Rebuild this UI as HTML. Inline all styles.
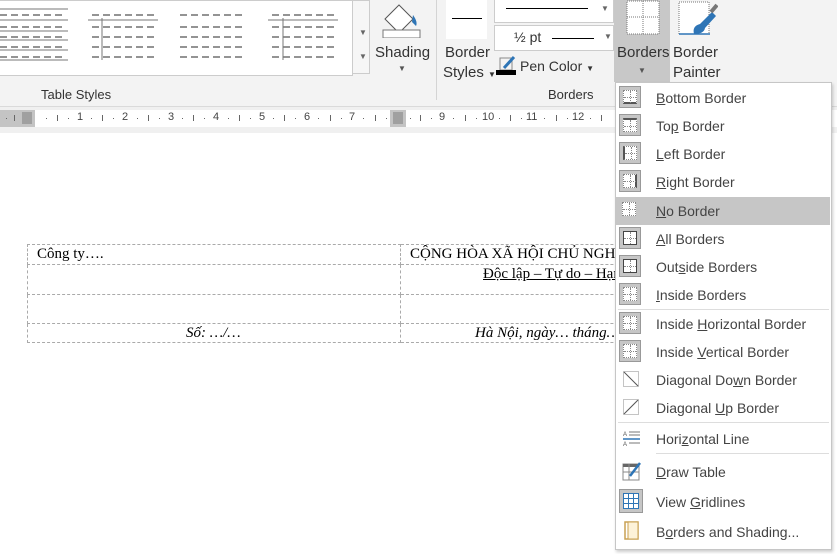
<!DOCTYPE html><html><head><style>
body{margin:0;width:837px;height:554px;overflow:hidden;position:relative;background:#fff;font-family:"Liberation Sans",sans-serif;}
.a{position:absolute}
.rib{left:0;top:0;width:837px;height:106px;background:#f3f3f3;border-bottom:1px solid #dadada}
.t{font-size:14px;color:#333;white-space:nowrap}
.menu{left:615px;top:82px;width:215px;height:466px;background:#fff;border:1px solid #c6c6c6;box-shadow:1px 2px 3px rgba(0,0,0,.2)}
.it{position:absolute;left:0;width:215px;height:28px;font-size:14px;color:#444}
.it span{position:absolute;left:40px;top:6px;white-space:nowrap}
.ic{position:absolute;left:3px;top:2px;width:22px;height:22px;background:#c6c6c6;border:1px solid #999;box-sizing:border-box}
.ic i{position:absolute;left:3px;top:3px;width:14px;height:14px;background:#fff;border:1px dotted #888;box-sizing:border-box}
.ic i:before{content:"";position:absolute;left:6px;top:0;height:12px;border-left:1px dotted #888}
.ic i:after{content:"";position:absolute;top:6px;left:0;width:12px;border-top:1px dotted #888}
.sep{position:absolute;height:1px;background:#ddd}
u{text-decoration:underline}
.rn{position:absolute;top:111px;font-size:11px;color:#444}
.rd{position:absolute;top:118px;width:1px;height:1px;background:#666}
.rt{position:absolute;top:115px;width:1px;height:6px;background:#666}
table{table-layout:fixed}
td{border:1px dashed #aaa;font-family:"Liberation Serif",serif;font-size:15px;padding:0 9px;vertical-align:top;white-space:nowrap;overflow:hidden;line-height:18px}
</style></head><body>
<div class="a rib"></div>
<div class="a" style="left:0;top:0;width:352px;height:74px;background:#fff;border:1px solid #ccc;border-left:none"></div>
<svg class="a" style="left:0;top:0" width="352" height="70">
<g stroke="#555" stroke-width="1.3" stroke-dasharray="7,4">
<line x1="0" y1="15" x2="64" y2="15"/><line x1="0" y1="27" x2="64" y2="27"/><line x1="0" y1="37" x2="64" y2="37"/><line x1="0" y1="47" x2="64" y2="47"/><line x1="0" y1="57" x2="64" y2="57"/>
<line x1="92" y1="15" x2="156" y2="15"/><line x1="92" y1="27" x2="156" y2="27"/><line x1="92" y1="37" x2="156" y2="37"/><line x1="92" y1="47" x2="156" y2="47"/><line x1="92" y1="57" x2="156" y2="57"/>
<line x1="180" y1="15" x2="244" y2="15"/><line x1="180" y1="27" x2="244" y2="27"/><line x1="180" y1="37" x2="244" y2="37"/><line x1="180" y1="47" x2="244" y2="47"/><line x1="180" y1="57" x2="244" y2="57"/>
<line x1="272" y1="15" x2="336" y2="15"/><line x1="272" y1="27" x2="336" y2="27"/><line x1="272" y1="37" x2="336" y2="37"/><line x1="272" y1="47" x2="336" y2="47"/><line x1="272" y1="57" x2="336" y2="57"/>
</g>
<g stroke="#777" stroke-width="1"><line x1="0" y1="9" x2="68" y2="9"/><line x1="0" y1="20" x2="68" y2="20"/><line x1="0" y1="31" x2="68" y2="31"/><line x1="0" y1="40" x2="68" y2="40"/><line x1="0" y1="50" x2="68" y2="50"/><line x1="0" y1="60" x2="68" y2="60"/>
<line x1="88" y1="20" x2="158" y2="20"/><line x1="102" y1="18" x2="102" y2="60"/><line x1="268" y1="20" x2="338" y2="20"/><line x1="283" y1="18" x2="283" y2="60"/></g>
</svg>
<div class="a" style="left:352px;top:0;width:18px;height:74px;background:#f6f6f6;border:1px solid #ccc;box-sizing:border-box"></div>
<div class="a t" style="left:359px;top:28px;font-size:8px;color:#666">▼</div>
<div class="a t" style="left:359px;top:52px;font-size:8px;color:#666">▼</div>
<svg class="a" style="left:382px;top:0" width="40" height="38"><path d="M3 19 L17 5 L31 19 L17 33Z" fill="#fff" stroke="#555"/><path d="M31 15 Q36 22 34 26 L30 22Z" fill="#2e75b6"/><rect x="1" y="30" width="37" height="8" fill="#fff" stroke="#777"/></svg>
<div class="a t" style="left:375px;top:44px;font-size:15px">Shading</div>
<div class="a t" style="left:398px;top:64px;font-size:8px;color:#555">▼</div>
<div class="a t" style="left:41px;top:87px;font-size:13px">Table Styles</div>
<div class="a" style="left:436px;top:0;width:1px;height:100px;background:#d4d4d4"></div>
<div class="a" style="left:446px;top:0;width:41px;height:39px;background:#fff"></div>
<div class="a" style="left:452px;top:18px;width:30px;height:1px;background:#000"></div>
<div class="a t" style="left:445px;top:44px;font-size:15px">Border</div>
<div class="a t" style="left:443px;top:64px;font-size:15px">Styles <span style="font-size:8px">▼</span></div>
<div class="a" style="left:494px;top:0;width:120px;height:23px;background:#fff;border:1px solid #ccc;border-top:none;box-sizing:border-box"></div>
<div class="a" style="left:506px;top:8px;width:82px;height:1px;background:#000"></div>
<div class="a t" style="left:601px;top:4px;font-size:8px;color:#666">▼</div>
<div class="a" style="left:494px;top:25px;width:120px;height:26px;background:#fff;border:1px solid #ccc;box-sizing:border-box"></div>
<div class="a t" style="left:514px;top:29px;font-size:14px">½ pt</div>
<div class="a" style="left:552px;top:38px;width:42px;height:1px;background:#000"></div>
<div class="a t" style="left:604px;top:32px;font-size:8px;color:#666">▼</div>
<svg class="a" style="left:496px;top:55px" width="22" height="20"><path d="M4 3h12v12H4z" fill="none" stroke="#888"/><path d="M8 13 L18 2" stroke="#2e75b6" stroke-width="3"/><rect x="0" y="15" width="20" height="5" fill="#000"/></svg>
<div class="a t" style="left:520px;top:58px;font-size:14px">Pen Color <span style="font-size:8px">▼</span></div>
<div class="a t" style="left:548px;top:87px;font-size:13px">Borders</div>
<div class="a" style="left:614px;top:0;width:56px;height:82px;background:#c8c8c8"></div>
<svg class="a" style="left:626px;top:0" width="34" height="36"><rect x="1" y="1" width="32" height="33" fill="#fff" stroke="#777" stroke-dasharray="1,1"/><line x1="17" y1="1" x2="17" y2="34" stroke="#777" stroke-dasharray="1,1"/><line x1="1" y1="17" x2="33" y2="17" stroke="#777" stroke-dasharray="1,1"/></svg>
<div class="a t" style="left:617px;top:44px;font-size:15px">Borders</div>
<div class="a t" style="left:638px;top:66px;font-size:8px;color:#555">▼</div>
<svg class="a" style="left:678px;top:0" width="40" height="40"><rect x="1" y="2" width="30" height="32" fill="#fff" stroke="#777" stroke-dasharray="1,1"/><line x1="1" y1="34" x2="32" y2="34" stroke="#2e75b6" stroke-width="1.5"/><path d="M16 34 Q14 26 22 24 L34 12 L38 16 L27 28 Q26 34 16 34Z" fill="#2e75b6"/><path d="M33 12 L39 5" stroke="#777" stroke-width="4"/></svg>
<div class="a t" style="left:673px;top:44px;font-size:15px">Border</div>
<div class="a t" style="left:673px;top:64px;font-size:15px">Painter</div>
<!-- ruler -->
<div class="a" style="left:0;top:107px;width:837px;height:26px;background:#f0f0f0"></div>
<div class="a" style="left:0;top:110px;width:35px;height:17px;background:#c4c4c4"></div>
<div class="a" style="left:35px;top:110px;width:802px;height:17px;background:#fff"></div>
<div class="a" style="left:390px;top:110px;width:16px;height:17px;background:#c4c4c4"></div>
<div class="a" style="left:22px;top:112px;width:10px;height:12px;background:#888;opacity:.6"></div>
<div class="a" style="left:393px;top:112px;width:10px;height:12px;background:#888;opacity:.6"></div>
<div class="rt" style="left:14px"></div><div class="rd" style="left:6px"></div>
<span class="rn" style="left:77px">1</span><span class="rn" style="left:122px">2</span><span class="rn" style="left:168px">3</span><span class="rn" style="left:213px">4</span><span class="rn" style="left:259px">5</span><span class="rn" style="left:304px">6</span><span class="rn" style="left:349px">7</span><span class="rn" style="left:439px">9</span><span class="rn" style="left:482px">10</span><span class="rn" style="left:526px">11</span><span class="rn" style="left:572px">12</span>
<div class="rt" style="left:57px"></div><div class="rt" style="left:102px"></div><div class="rt" style="left:148px"></div><div class="rt" style="left:193px"></div><div class="rt" style="left:239px"></div><div class="rt" style="left:284px"></div><div class="rt" style="left:330px"></div><div class="rt" style="left:375px"></div><div class="rt" style="left:420px"></div><div class="rt" style="left:465px"></div><div class="rt" style="left:510px"></div><div class="rt" style="left:556px"></div><div class="rt" style="left:601px"></div>
<div class="rd" style="left:46px"></div><div class="rd" style="left:68px"></div><div class="rd" style="left:91px"></div><div class="rd" style="left:113px"></div><div class="rd" style="left:137px"></div><div class="rd" style="left:159px"></div><div class="rd" style="left:182px"></div><div class="rd" style="left:204px"></div><div class="rd" style="left:228px"></div><div class="rd" style="left:250px"></div><div class="rd" style="left:273px"></div><div class="rd" style="left:295px"></div><div class="rd" style="left:318px"></div><div class="rd" style="left:341px"></div><div class="rd" style="left:363px"></div><div class="rd" style="left:386px"></div><div class="rd" style="left:410px"></div><div class="rd" style="left:431px"></div><div class="rd" style="left:453px"></div><div class="rd" style="left:476px"></div><div class="rd" style="left:499px"></div><div class="rd" style="left:521px"></div><div class="rd" style="left:544px"></div><div class="rd" style="left:567px"></div><div class="rd" style="left:590px"></div>
<!-- table -->
<table class="a" style="left:27px;top:244px;border-collapse:collapse;width:720px">
<col style="width:373px"><col style="width:347px">
<tr style="height:20px"><td>Công ty….</td><td>CỘNG HÒA XÃ HỘI CHỦ NGHĨA VIỆT NAM</td></tr>
<tr style="height:30px"><td></td><td style="padding-left:82px"><u>Độc lập – Tự do – Hạnh phúc</u></td></tr>
<tr style="height:29px"><td></td><td></td></tr>
<tr style="height:19px"><td style="font-style:italic;padding-left:158px">Số: …/…</td><td style="font-style:italic;padding-left:74px">Hà Nội, ngày… tháng… năm</td></tr>
</table>
<div class="a menu">
<div class="a" style="left:0;top:114px;width:214px;height:28px;background:#c6c6c6"></div>
<div class="it" style="top:1px"><div class="ic"><i style="border-bottom:2px solid #555"></i></div><span><u>B</u>ottom Border</span></div>
<div class="it" style="top:29px"><div class="ic"><i style="border-top:2px solid #555"></i></div><span>To<u>p</u> Border</span></div>
<div class="it" style="top:57px"><div class="ic"><i style="border-left:2px solid #555"></i></div><span><u>L</u>eft Border</span></div>
<div class="it" style="top:85px"><div class="ic"><i style="border-right:2px solid #555"></i></div><span><u>R</u>ight Border</span></div>
<div class="it" style="top:114px"><div class="ic" style="background:none;border:none"><i></i></div><span><u>N</u>o Border</span></div>
<div class="it" style="top:142px"><div class="ic"><i style="border:1px solid #444"></i></div><span><u>A</u>ll Borders</span></div>
<div class="it" style="top:170px"><div class="ic"><i style="border:1px solid #444"></i></div><span>Out<u>s</u>ide Borders</span></div>
<div class="it" style="top:198px"><div class="ic"><i></i></div><span><u>I</u>nside Borders</span></div>
<div class="sep" style="left:2px;top:226px;width:211px"></div>
<div class="it" style="top:227px"><div class="ic"><i></i></div><span>Inside <u>H</u>orizontal Border</span></div>
<div class="it" style="top:255px"><div class="ic"><i></i></div><span>Inside <u>V</u>ertical Border</span></div>
<div class="it" style="top:283px"><svg class="a" style="left:7px;top:5px" width="16" height="16"><rect x=".5" y=".5" width="15" height="15" fill="none" stroke="#888" stroke-dasharray="1,1"/><line x1="1" y1="1" x2="15" y2="15" stroke="#555"/></svg><span>Diagonal Do<u>w</u>n Border</span></div>
<div class="it" style="top:311px"><svg class="a" style="left:7px;top:5px" width="16" height="16"><rect x=".5" y=".5" width="15" height="15" fill="none" stroke="#888" stroke-dasharray="1,1"/><line x1="1" y1="15" x2="15" y2="1" stroke="#555"/></svg><span>Diagonal <u>U</u>p Border</span></div>
<div class="sep" style="left:2px;top:339px;width:211px"></div>
<div class="it" style="top:342px"><svg class="a" style="left:7px;top:4px" width="18" height="18"><text x="0" y="7" font-size="6" fill="#555" font-family="Liberation Sans">A</text><text x="0" y="17" font-size="6" fill="#555" font-family="Liberation Sans">A</text><line x1="6" y1="3" x2="17" y2="3" stroke="#777"/><line x1="6" y1="6" x2="17" y2="6" stroke="#777"/><line x1="0" y1="10" x2="17" y2="10" stroke="#2e75b6" stroke-width="1.5"/><line x1="6" y1="14" x2="17" y2="14" stroke="#777"/></svg><span>Hori<u>z</u>ontal Line</span></div>
<div class="sep" style="left:40px;top:370px;width:173px"></div>
<div class="it" style="top:375px"><svg class="a" style="left:6px;top:2px" width="20" height="22"><rect x="1" y="4" width="16" height="16" fill="#fff" stroke="#888"/><rect x="1" y="4" width="16" height="3" fill="#666"/><line x1="7" y1="4" x2="7" y2="20" stroke="#888"/><line x1="1" y1="12" x2="17" y2="12" stroke="#888"/><path d="M8 16 L18 3" stroke="#2e75b6" stroke-width="2.5"/></svg><span><u>D</u>raw Table</span></div>
<div class="it" style="top:405px"><div class="ic" style="top:1px;width:24px;height:24px"><svg class="a" style="left:3px;top:3px" width="16" height="16"><rect x=".5" y=".5" width="15" height="15" fill="#fff" stroke="#2e75b6"/><path d="M5.5 0v16M10.5 0v16M0 5.5h16M0 10.5h16" stroke="#2e75b6"/></svg></div><span>View <u>G</u>ridlines</span></div>
<div class="it" style="top:435px"><svg class="a" style="left:8px;top:3px" width="16" height="20"><rect x="1" y="1" width="13" height="17" fill="#fff" stroke="#c9a152" stroke-width="1.5"/><rect x="4" y="1" width="10" height="17" fill="#fdf2d8" stroke="#c9a152"/></svg><span>B<u>o</u>rders and Shading...</span></div>
</div>
</body></html>
